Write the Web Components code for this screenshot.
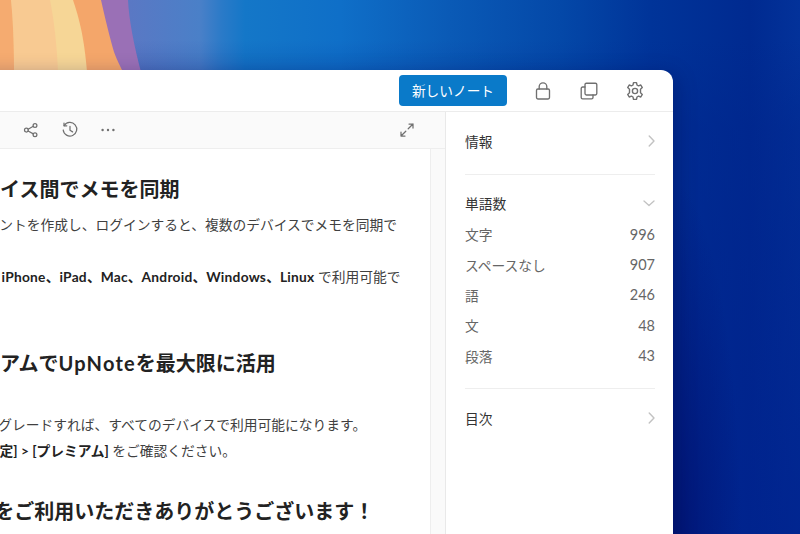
<!DOCTYPE html>
<html lang="ja"><head><meta charset="utf-8"><style>
html,body{margin:0;padding:0;background:#0a3aa0}
body{font-family:Lato,"Noto Sans CJK JP",sans-serif;color:#333}
.l{letter-spacing:.24px}
.u{letter-spacing:1.2px}
</style></head><body>
<desk-top>
  <app-window>
    <top-bar slot="top"></top-bar>
    <note-editor slot="main">
      <note-h style="margin-left:3px">デバイス間でメモを同期</note-h>
      <note-p style="margin-top:9px;margin-left:1px">アカウントを作成し、ログインすると、複数のデバイスでメモを同期で</note-p>
      <note-p style="margin-top:26px"><b>端末は <span class="l">iPhone</span>、<span class="l">iPad</span>、<span class="l">Mac</span>、<span class="l">Android</span>、<span class="l">Windows</span>、<span class="l">Linux</span></b> で利用可能で</note-p>
      <note-h style="margin-top:59px;margin-left:-17px">プレミ<span>アムで</span><span class="u">UpNote</span>を最大限に活用</note-h>
      <note-p style="margin-top:35px">アップグレードすれば、すべてのデバイスで利用可能になります。</note-p>
      <note-p style="margin-left:-3px">詳細<b>[設定] &gt; [プレミアム]</b> をご確認ください。</note-p>
      <note-h style="margin-top:33px;margin-left:-40px"><span class="u">UpNote</span>をご利用いただきありがとうございます！</note-h>
    </note-editor>
    <info-side slot="side"></info-side>
  </app-window>
</desk-top>
<script>
function def(name, css, html){
  customElements.define(name, class extends HTMLElement{
    constructor(){super();const r=this.attachShadow({mode:'open'});r.innerHTML='<style>'+css+'</style>'+(html||'<slot></slot>');}
  });
}
const stroke='fill="none" stroke="currentColor" stroke-linecap="round" stroke-linejoin="round"';
def('desk-top',`
:host{display:block;position:relative;width:800px;height:534px;overflow:hidden;
 background:
  radial-gradient(70px 380px at 672px 560px,rgba(0,16,110,.8) 0%,rgba(0,16,110,0) 100%),
  linear-gradient(180deg,rgba(0,40,130,0) 40px,rgba(0,36,140,.45) 130px,rgba(0,32,140,.7) 534px),
  linear-gradient(90deg,#5a78c4 0,#5a78c4 130px,#4a80c8 200px,#2a7ac8 222px,#1477c8 245px,#0f6fc8 340px,#0a5ab6 450px,#0448a8 560px,#003499 650px,#002a90 750px,#03329a 800px);}
svg{position:absolute;left:0;top:0}
`,`<svg width="160" height="72" viewBox="0 0 160 72">
<path d="M128 0C129 20 134 45 141 72H0V0Z" fill="#9a70b6"/>
<path d="M101 0C105 18 110 38 114 52C117 60 120 66 123 72H0V0Z" fill="#f4a66a"/>
<path d="M73 0C79 18 84 36 87 72H0V0Z" fill="#f6d696"/>
<path d="M50 0C54 20 57 45 58 72H14C14 45 13 20 11 0Z" fill="#f8ca92"/>
<path d="M11 0C13 20 14 45 14 72H0V0Z" fill="#f5ab70"/>
</svg><slot></slot>`);
def('app-window',`
:host{display:flex;flex-direction:column;position:absolute;left:-200px;top:70px;width:873px;height:520px;background:#fff;border-radius:0 12px 0 0;box-shadow:4px 4px 20px rgba(0,10,70,.3);overflow:hidden}
.row{display:flex;flex:1;min-height:0}
`,`<slot name="top"></slot><div class="row"><slot name="main"></slot><slot name="side"></slot></div>`);
def('top-bar',`
:host{display:flex;align-items:center;justify-content:flex-end;height:41px;border-bottom:1px solid #ececec;padding-right:15px;flex:none;color:#707070}
button{all:unset;box-sizing:border-box;width:108px;height:31px;margin-right:13px;background:#0a7ac9;border-radius:4px;color:#fff;font:400 13.7px/31px Lato,"Noto Sans CJK JP",sans-serif;text-align:center}
.i{width:46px;height:24px;display:flex;align-items:center;justify-content:center}
`,`<button>新しいノート</button>
<span class="i"><svg width="20" height="20" viewBox="0 0 20 20" ${stroke} stroke-width="1.35"><rect x="3.5" y="8" width="13" height="10" rx="1.4"/><path d="M6.2 8V5.6a3.8 3.8 0 0 1 7.6 0V8"/></svg></span>
<span class="i"><svg width="20" height="20" viewBox="0 0 20 20" ${stroke} stroke-width="1.35"><rect x="6" y="2.2" width="11.8" height="11.8" rx="1.4"/><path d="M6 6H3.6a1.4 1.4 0 0 0-1.4 1.4v9a1.4 1.4 0 0 0 1.4 1.4h9a1.4 1.4 0 0 0 1.4-1.4V14"/></svg></span>
<span class="i" style="padding-right:1px;width:45px"><svg width="20" height="20" viewBox="0 0 20 20" ${stroke} stroke-width="1.4"><circle cx="10" cy="10" r="2.6"/><path d="M8.5 1.6h3l.5 2.4 1.5.8 2.3-.8 1.5 2.6-1.8 1.6v3.6l1.8 1.6-1.5 2.6-2.3-.8-1.5.8-.5 2.4h-3L8 16l-1.5-.8-2.3.8-1.5-2.6 1.8-1.6V8.2L2.7 6.6l1.5-2.6 2.3.8L8 4z"/></svg></span>`);
def('note-editor',`
:host{display:flex;flex-direction:column;flex:1;min-width:0;color:#707070}
.bar{display:flex;align-items:center;height:36px;flex:none;background:#fafafa;border-bottom:1px solid #eee;padding:0 18.75px 0 173.25px}
.i{width:38.5px;height:24px;display:flex;align-items:center;justify-content:center;flex:none}
.end{margin-left:auto}
.body{display:flex;flex:1;min-height:0}
.doc{flex:1;min-width:0;padding:26px 0 0 157px;color:#333;overflow:hidden}
.gut{width:14px;flex:none;background:#fafafa;border-left:1px solid #eee}
`,`<div class="bar">
<span class="i"><svg width="18" height="18" viewBox="0 0 18 18" ${stroke} stroke-width="1.2" color="#c4c4c4"><path d="M7 5l4 4-4 4"/></svg></span>
<span class="i"><svg width="18" height="18" viewBox="0 0 18 18" ${stroke} stroke-width="1.25"><circle cx="13" cy="4.4" r="1.9"/><circle cx="13" cy="13.8" r="1.9"/><circle cx="4.4" cy="9.1" r="1.9"/><path d="M6.1 8.2 11.3 5.3M6.1 10l5.2 2.9"/></svg></span>
<span class="i" style="padding-left:1px;width:37.5px"><svg width="18" height="18" viewBox="0 0 18 18" ${stroke} stroke-width="1.25"><path d="M3.2 4.6A6.8 6.8 0 1 1 2.2 9"/><path d="M3 2v2.8h2.8"/><path d="M9 5.4v3.9l2.6 1.6"/></svg></span>
<span class="i"><svg width="18" height="18" viewBox="0 0 18 18" fill="currentColor"><circle cx="3.6" cy="9" r="1.2"/><circle cx="9" cy="9" r="1.2"/><circle cx="14.4" cy="9" r="1.2"/></svg></span>
<span class="i end"><svg width="18" height="18" viewBox="0 0 18 18" ${stroke} stroke-width="1.25"><path d="M10.2 7.8 15 3M11 3h4v4M7.8 10.2 3 15M3 11v4h4"/></svg></span>
</div><div class="body"><div class="doc"><slot></slot></div><div class="gut"></div></div>`);
def('note-h',`:host{display:block;font-size:20px;line-height:28px;font-weight:700;color:#222;white-space:nowrap}`);
def('note-p',`:host{display:block;font-size:13.75px;line-height:26px;color:#404040;white-space:nowrap}::slotted(b){color:#222;font-weight:700}`);
def('info-side',`
:host{display:block;width:228px;flex:none;box-sizing:border-box;border-left:1px solid #e9e9e9;padding:0 18px 0 19px;background:#fff}
.h{display:flex;justify-content:space-between;align-items:center;height:22px;font-size:13.75px;color:#333}
.r{display:flex;justify-content:space-between;align-items:center;height:30.4px;font-size:13.75px;color:#666}
.n{font-size:14.5px}
hr{border:0;border-top:1px solid #eee;margin:0}
svg{color:#c2c2c2;display:block}
`,`<div class="h" style="margin-top:18px"><span>情報</span><svg width="10" height="16" viewBox="0 0 10 16" ${stroke} stroke-width="1.4" style="margin-right:-1px"><path d="M3.2 3 8 8l-4.8 5"/></svg></div>
<hr style="margin-top:22px">
<div class="h" style="margin-top:17px"><span>単語数</span><svg width="14" height="10" viewBox="0 0 14 10" ${stroke} stroke-width="1.3" style="margin-right:-1px"><path d="M2 3 7 7.5 12 3"/></svg></div>
<div class="r" style="margin-top:5px"><span>文字</span><span class="n">996</span></div>
<div class="r"><span>スペースなし</span><span class="n">907</span></div>
<div class="r"><span>語</span><span class="n">246</span></div>
<div class="r"><span>文</span><span class="n">48</span></div>
<div class="r"><span>段落</span><span class="n">43</span></div>
<hr style="margin-top:17px">
<div class="h" style="margin-top:18px"><span>目次</span><svg width="10" height="16" viewBox="0 0 10 16" ${stroke} stroke-width="1.4" style="margin-right:-1px"><path d="M3.2 3 8 8l-4.8 5"/></svg></div>`);
</script>
</body></html>
